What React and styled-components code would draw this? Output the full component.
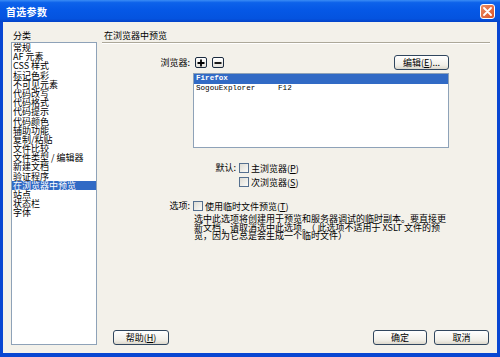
import React from 'react';
import styled, { createGlobalStyle } from 'styled-components';

const GlobalStyle = createGlobalStyle`
  html, body {
    margin: 0;
    padding: 0;
  }
  body {
    font-family: "Noto Sans CJK SC", sans-serif;
    font-size: 9px;
    color: #000;
  }
`;

const Window = styled.div`
  width: 500px;
  height: 357px;
  display: flex;
  flex-direction: column;
  overflow: hidden;
  background: #0846d2;
`;

const TitleBar = styled.div`
  height: 22px;
  flex: none;
  display: flex;
  align-items: center;
  justify-content: space-between;
  padding: 0 5px 0 6px;
  background: linear-gradient(
    to bottom,
    #3a8cf5 0%,
    #0d62ea 12%,
    #0558e6 45%,
    #0453df 85%,
    #0342c8 100%
  );
  color: #fff;
  font-weight: bold;
  font-size: 10px;
  letter-spacing: 0.3px;
`;

const CloseButton = styled.div`
  width: 15px;
  height: 15px;
  box-sizing: border-box;
  border: 1px solid #fff;
  border-radius: 3px;
  background: linear-gradient(135deg, #ec8c62, #d9542b);
  display: flex;
  align-items: center;
  justify-content: center;
`;

const Body = styled.div`
  flex: 1;
  margin: 0 3px 4px 3px;
  background: #f3f1ea;
  display: flex;
  gap: 5px;
  padding: 7px 7px 8px 8px;
  min-height: 0;
`;

const LeftColumn = styled.div`
  width: 86px;
  flex: none;
  display: flex;
  flex-direction: column;
`;

const Caption = styled.div`
  height: 13px;
  line-height: 13px;
  padding-left: 2px;
  white-space: nowrap;
`;

const CategoryList = styled.div`
  flex: 1;
  background: #fff;
  border: 1px solid #8ea2b8;
  padding-top: 0;
`;

const CategoryItem = styled.div`
  height: 9.2px;
  line-height: 9.2px;
  padding-left: 1px;
  white-space: nowrap;
  background: ${p => (p.$selected ? '#316ac5' : 'transparent')};
  color: ${p => (p.$selected ? '#fff' : '#000')};
`;

const RightColumn = styled.div`
  flex: 1;
  min-width: 0;
  display: flex;
  flex-direction: column;
`;

const Rule = styled.div`
  height: 0;
  border-top: 1px solid #aca899;
  border-bottom: 1px solid #fff;
`;

const FieldGrid = styled.div`
  display: grid;
  grid-template-columns: ${p => p.$label}px auto;
  column-gap: 3px;
  align-items: center;
  margin-top: ${p => p.$top}px;
`;

const FieldLabel = styled.div`
  text-align: right;
  white-space: nowrap;
  line-height: 14px;
`;

const Toolbar = styled.div`
  width: 256px;
  height: 15px;
  display: flex;
  align-items: center;
`;

const IconButton = styled.div`
  width: 12px;
  height: 11px;
  box-sizing: border-box;
  border: 1px solid #1b2b3f;
  border-radius: 2px;
  background: linear-gradient(#fff, #e4e2da);
  display: flex;
  align-items: center;
  justify-content: center;
  margin-left: ${p => p.$gap}px;
`;

const Button = styled.div`
  width: ${p => p.$w}px;
  height: 15px;
  box-sizing: border-box;
  border: 1px solid #30465e;
  border-radius: 3px;
  background: linear-gradient(#ffffff, #f1efe8 70%, #dcd8cc);
  line-height: 13px;
  text-align: center;
  white-space: nowrap;
  margin-left: ${p => p.$ml || 0}px;
  u {
    text-decoration: underline;
  }
`;

const BrowserList = styled.div`
  grid-column: 2;
  width: 256px;
  height: 75px;
  box-sizing: border-box;
  margin-top: 3px;
  border: 1px solid #8ea2b8;
  background: #fff;
  font-family: "Liberation Mono", monospace;
  font-size: 7.6px;
`;

const BrowserRow = styled.div`
  height: 9.5px;
  line-height: 9.5px;
  padding-left: 2px;
  white-space: pre;
  font-weight: ${p => (p.$selected ? 'bold' : 'normal')};
  background: ${p => (p.$selected ? '#316ac5' : 'transparent')};
  color: ${p => (p.$selected ? '#fff' : '#000')};
`;

const CheckRow = styled.div`
  grid-column: 2;
  height: 14px;
  display: flex;
  align-items: center;
  gap: 2px;
  white-space: nowrap;
`;

const CheckBox = styled.span`
  width: 10px;
  height: 10px;
  box-sizing: border-box;
  border: 1px solid #55708f;
  background: linear-gradient(135deg, #dedcd4, #fbfbf8);
  flex: none;
`;

const Note = styled.div`
  grid-column: 2;
  margin-top: 2px;
  padding-left: 1px;
  line-height: 8.7px;
`;

const NoteLine = styled.span`
  display: block;
  white-space: pre;
`;

const Footer = styled.div`
  margin-top: auto;
  display: flex;
  align-items: center;
`;

const FooterRight = styled.div`
  margin-left: auto;
  margin-right: 1px;
  display: flex;
  gap: 7px;
`;

const categories = [
  '常规',
  'AF 元素',
  'CSS 样式',
  '标记色彩',
  '不可见元素',
  '代码改写',
  '代码格式',
  '代码提示',
  '代码颜色',
  '辅助功能',
  '复制/粘贴',
  '文件比较',
  '文件类型 / 编辑器',
  '新建文档',
  '验证程序',
  '在浏览器中预览',
  '站点',
  '状态栏',
  '字体'
];

const selected = '在浏览器中预览';

const App = () => (
  <>
    <GlobalStyle />
    <Window>
      <TitleBar>
        <span>首选参数</span>
        <CloseButton>
          <svg width="9" height="9" viewBox="0 0 9 9">
            <path d="M1 1 L8 8 M8 1 L1 8" stroke="#fff" strokeWidth="1.8" strokeLinecap="round" />
          </svg>
        </CloseButton>
      </TitleBar>
      <Body>
        <LeftColumn>
          <Caption>分类</Caption>
          <CategoryList>
            {categories.map(c => (
              <CategoryItem key={c} $selected={c === selected}>
                {c}
              </CategoryItem>
            ))}
          </CategoryList>
        </LeftColumn>
        <RightColumn>
          <Caption>在浏览器中预览</Caption>
          <Rule />
          <FieldGrid $label={88} $top={11}>
            <FieldLabel>浏览器:</FieldLabel>
            <Toolbar>
              <IconButton $gap={2}>
                <svg width="8" height="8" viewBox="0 0 8 8">
                  <path d="M4 0.5 V7.5 M0.5 4 H7.5" stroke="#000" strokeWidth="1.8" />
                </svg>
              </IconButton>
              <IconButton $gap={5}>
                <svg width="8" height="8" viewBox="0 0 8 8">
                  <path d="M0.5 4 H7.5" stroke="#000" strokeWidth="1.8" />
                </svg>
              </IconButton>
              <Button $w={55} style={{ marginLeft: 'auto' }}>
                编辑(<u>E</u>)...
              </Button>
            </Toolbar>
            <BrowserList>
              <BrowserRow $selected>Firefox</BrowserRow>
              <BrowserRow>{'SogouExplorer     F12'}</BrowserRow>
            </BrowserList>
          </FieldGrid>
          <FieldGrid $label={134} $top={13}>
            <FieldLabel>默认:</FieldLabel>
            <CheckRow>
              <CheckBox />
              <span>
                主浏览器(<u>P</u>)
              </span>
            </CheckRow>
            <CheckRow>
              <CheckBox />
              <span>
                次浏览器(<u>S</u>)
              </span>
            </CheckRow>
          </FieldGrid>
          <FieldGrid $label={88} $top={10}>
            <FieldLabel>选项:</FieldLabel>
            <CheckRow>
              <CheckBox />
              <span>
                使用临时文件预览(<u>T</u>)
              </span>
            </CheckRow>
            <Note>
              <NoteLine>选中此选项将创建用于预览和服务器调试的临时副本。要直接更</NoteLine>
              <NoteLine>新文档，请取消选中此选项。（ 此选项不适用于 XSLT 文件的预</NoteLine>
              <NoteLine>览，因为它总是会生成一个临时文件）</NoteLine>
            </Note>
          </FieldGrid>
          <Footer>
            <Button $w={56} $ml={11}>
              帮助(<u>H</u>)
            </Button>
            <FooterRight>
              <Button $w={54}>确定</Button>
              <Button $w={55}>取消</Button>
            </FooterRight>
          </Footer>
        </RightColumn>
      </Body>
    </Window>
  </>
);

export default App;
